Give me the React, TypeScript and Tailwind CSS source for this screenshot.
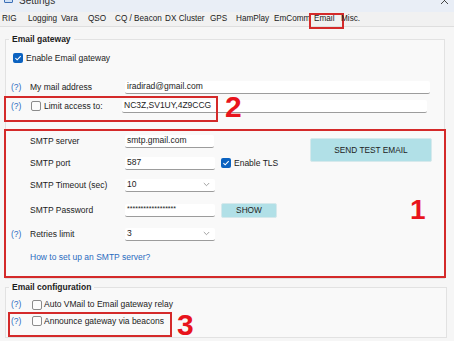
import React from "react";

const tabs: [string, number][] = [
  ["RIG", 26],
  ["Logging", 33],
  ["Vara", 27],
  ["QSO", 27],
  ["CQ / Beacon", 50],
  ["DX Cluster", 45],
  ["GPS", 26],
  ["HamPlay", 38],
  ["EmComm", 40],
  ["Email", 27],
  ["Misc.", 21],
];

function Box({ checked }: { checked?: boolean }) {
  if (checked) {
    return (
      <span className="w-[10px] h-[10px] shrink-0 rounded-[2px] bg-[#0b62c0] flex items-center justify-center">
        <svg width="8" height="8" viewBox="0 0 8 8">
          <path d="M1.4 4.1 L3.2 5.8 L6.7 2.1" stroke="white" strokeWidth="1.1" fill="none" />
        </svg>
      </span>
    );
  }
  return <span className="w-[10px] h-[10px] shrink-0 rounded-[2px] border border-[#8b8b8b] bg-[#fcfcfc]" />;
}

function Help() {
  return <span className="text-[#2a6cbf]">(?)</span>;
}

function Field({ value, w, select }: { value: string; w: string; select?: boolean }) {
  return (
    <div className={`${w} h-[13px] bg-white border-b border-[#9c9c9c] rounded-[2px] pl-[2px] pr-[5px] flex items-center`}>
      <span className="flex-1">{value}</span>
      {select && (
        <svg width="7" height="5" viewBox="0 0 7 5">
          <path d="M0.8 1 L3.5 3.7 L6.2 1" stroke="#8a8a8a" strokeWidth="0.8" fill="none" />
        </svg>
      )}
    </div>
  );
}

export default function App() {
  return (
    <div className="w-[454px] h-[341px] overflow-hidden bg-[#f6f6f6] text-[#1c1c1c] font-['Liberation_Sans',Arial,sans-serif] text-[8.5px]">
      {/* title bar */}
      <div className="h-[12px] bg-[#e9eef6] flex items-start overflow-hidden">
        <div className="ml-[4px] -mt-[4px] w-[9px] h-[7px] rounded-[1px] border border-[#3b6fb6] bg-[#cfe0f5]" />
        <span className="ml-[6px] -mt-[5px] text-[10px] leading-[12px] text-[#333]">Settings</span>
        <svg className="ml-auto mr-[5px] -mt-[4px]" width="9" height="9" viewBox="0 0 9 9">
          <path d="M1 1 L8 8 M8 1 L1 8" stroke="#333" strokeWidth="0.9" />
        </svg>
      </div>

      {/* tabs */}
      <div className="h-[15px] flex items-center bg-[#f1f1f1] border-b border-[#dedede] text-[8.2px] text-[#222]">
        {tabs.map(([t, w]) => (
          <div key={t} className="relative h-full flex items-center pl-[2px]" style={{ width: w }}>
            {t}
            {t === "Email" && (
              <div className="absolute -left-[3px] top-[1px] w-[35px] h-[16px] border-2 border-[#d42a2a] pointer-events-none" />
            )}
          </div>
        ))}
      </div>

      {/* Email gateway */}
      <fieldset className="m-0 p-0 mt-[7px] ml-[5px] w-[440px] border border-[#e2e2e2] bg-[#f9f9f9]">
        <legend className="ml-[3px] px-[3px] font-bold leading-[11px]">Email gateway</legend>

        <div className="mt-[6px] h-[14px] flex items-center pl-[7px] gap-[3px]">
          <Box checked />
          <span>Enable Email gateway</span>
        </div>

        <div className="mt-[15px] h-[14px] flex items-center pl-[5px]">
          <span className="w-[19px]"><Help /></span>
          <span className="w-[95px]">My mail address</span>
          <Field value="iradirad@gmail.com" w="w-[305px]" />
        </div>

        <div className="relative mt-[5px] h-[14px] flex items-center pl-[5px]">
          <span className="w-[20px]"><Help /></span>
          <Box />
          <span className="w-[81px] pl-[3px]">Limit access to:</span>
          <Field value="NC3Z,SV1UY,4Z9CCG" w="w-[305px]" />
          <div className="absolute -left-[2px] -top-[3px] w-[214px] h-[26px] border-2 border-[#d42a2a] pointer-events-none" />
          <span className="absolute left-[219px] -top-[7px] text-[30px] leading-none font-bold text-[#e8141c]">2</span>
        </div>

        <div className="mt-[16px] -mx-[2px] border-2 border-[#d42a2a] pb-[12px]">
          <div className="flex">
            <div className="w-[280px] pt-[3px]">
              <div className="h-[14px] flex items-center pl-[24px]">
                <span className="w-[95px]">SMTP server</span>
                <Field value="smtp.gmail.com" w="w-[89px]" />
              </div>
              <div className="mt-[8px] h-[14px] flex items-center pl-[24px]">
                <span className="w-[95px]">SMTP port</span>
                <Field value="587" w="w-[90px]" />
                <span className="ml-[6px]"><Box checked /></span>
                <span className="ml-[3px]">Enable TLS</span>
              </div>
            </div>
            <button className="ml-[24px] mt-[7px] w-[122px] h-[24px] bg-[#b1e0e7] border border-[#d6e9ec] rounded-[2px] text-[8.3px] text-[#222]">
              SEND TEST EMAIL
            </button>
          </div>

          <div className="mt-[8px] h-[14px] flex items-center pl-[24px]">
            <span className="w-[95px]">SMTP Timeout (sec)</span>
            <Field value="10" w="w-[90px]" select />
          </div>

          <div className="mt-[11px] h-[14px] flex items-center pl-[24px]">
            <span className="w-[95px]">SMTP Password</span>
            <div className="w-[90px] h-[13px] bg-white border-b border-[#9c9c9c] rounded-[2px] pl-[2px] text-[7px] leading-[9px] overflow-hidden">
              ******************
            </div>
            <button className="ml-[6px] w-[56px] h-[15px] bg-[#b1e0e7] border border-[#d6e9ec] rounded-[2px] text-[8.3px] text-[#222]">
              SHOW
            </button>
            <span className="ml-[133px] text-[28px] leading-none font-bold text-[#e8141c]">1</span>
          </div>

          <div className="mt-[10px] h-[14px] flex items-center pl-[5px]">
            <span className="w-[19px]"><Help /></span>
            <span className="w-[95px]">Retries limit</span>
            <Field value="3" w="w-[90px]" select />
          </div>

          <div className="mt-[9px] h-[14px] flex items-center pl-[24px] text-[#2a6cbf]">
            How to set up an SMTP server?
          </div>
        </div>
      </fieldset>

      {/* Email configuration */}
      <fieldset className="m-0 p-0 mt-[3px] ml-[5px] w-[442px] border border-[#e2e2e2] bg-[#f9f9f9]">
        <legend className="ml-[3px] px-[3px] font-bold leading-[11px]">Email configuration</legend>

        <div className="mt-[4px] h-[15px] flex items-center pl-[5px]">
          <span className="w-[21px]"><Help /></span>
          <Box />
          <span className="pl-[2px]">Auto VMail to Email gateway relay</span>
        </div>

        <div className="flex items-start">
          <div className="ml-[2px] w-[164px] border-2 border-[#d42a2a] pb-[7px]">
            <div className="h-[14px] flex items-center pl-[1px]">
              <span className="w-[21px]"><Help /></span>
              <Box />
              <span className="pl-[2px]">Announce gateway via beacons</span>
            </div>
          </div>
          <span className="ml-[5px] h-[25px] text-[30px] leading-[25px] font-bold text-[#e8141c]">3</span>
        </div>
      </fieldset>
    </div>
  );
}
